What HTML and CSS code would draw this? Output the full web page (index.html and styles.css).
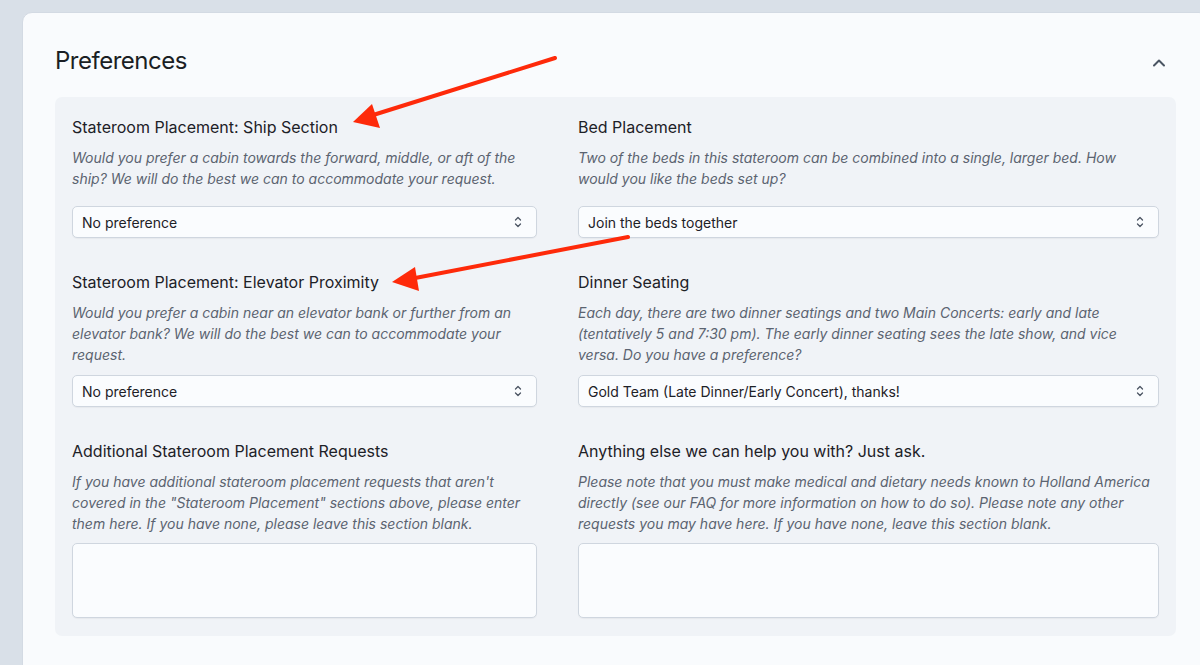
FILE: index.html
```html
<!DOCTYPE html>
<html lang="en">
<head>
    <meta charset="UTF-8">
    <meta name="viewport" content="width=device-width, initial-scale=1.0">
    <title>Preferences</title>
    <link rel="stylesheet" href="styles.css">
</head>
<body>

    <div class="card">
        <div class="card-header">
            <h2>Preferences</h2>
            <button class="collapse-btn" type="button" aria-label="Collapse">
                <svg width="14" height="10" viewBox="0 0 14 10"><path d="M2 7.5 L7 2.5 L12 7.5" fill="none" stroke="#4b5563" stroke-width="2" stroke-linecap="round" stroke-linejoin="round"/></svg>
            </button>
        </div>

        <div class="prefs-panel">
            <div class="field">
                <label for="ship_section">Stateroom Placement: Ship Section</label>
                <p class="hint">Would you prefer a cabin towards the forward, middle, or aft of the ship? We will do the best we can to accommodate your request.</p>
                <div class="select-wrap first-row">
                    <select id="ship_section">
                        <option>No preference</option>
                        <option>Forward</option>
                        <option>Middle</option>
                        <option>Aft</option>
                    </select>
                    <svg class="select-icon" width="10" height="14" viewBox="0 0 10 14"><path d="M2.5 5 L5 2.5 L7.5 5 M2.5 9 L5 11.5 L7.5 9" fill="none" stroke="#4b5563" stroke-width="1.3" stroke-linecap="round" stroke-linejoin="round"/></svg>
                </div>
            </div>

            <div class="field">
                <label for="bed_placement">Bed Placement</label>
                <p class="hint">Two of the beds in this stateroom can be combined into a single, larger bed. How would you like the beds set up?</p>
                <div class="select-wrap first-row">
                    <select id="bed_placement">
                        <option>Join the beds together</option>
                        <option>Keep the beds separate</option>
                    </select>
                    <svg class="select-icon" width="10" height="14" viewBox="0 0 10 14"><path d="M2.5 5 L5 2.5 L7.5 5 M2.5 9 L5 11.5 L7.5 9" fill="none" stroke="#4b5563" stroke-width="1.3" stroke-linecap="round" stroke-linejoin="round"/></svg>
                </div>
            </div>

            <div class="field">
                <label for="elevator">Stateroom Placement: Elevator Proximity</label>
                <p class="hint">Would you prefer a cabin near an elevator bank or further from an elevator bank? We will do the best we can to accommodate your request.</p>
                <div class="select-wrap">
                    <select id="elevator">
                        <option>No preference</option>
                        <option>Near an elevator bank</option>
                        <option>Away from an elevator bank</option>
                    </select>
                    <svg class="select-icon" width="10" height="14" viewBox="0 0 10 14"><path d="M2.5 5 L5 2.5 L7.5 5 M2.5 9 L5 11.5 L7.5 9" fill="none" stroke="#4b5563" stroke-width="1.3" stroke-linecap="round" stroke-linejoin="round"/></svg>
                </div>
            </div>

            <div class="field">
                <label for="dinner">Dinner Seating</label>
                <p class="hint">Each day, there are two dinner seatings and two Main Concerts: early and late (tentatively 5 and 7:30 pm). The early dinner seating sees the late show, and vice versa. Do you have a preference?</p>
                <div class="select-wrap">
                    <select id="dinner">
                        <option>Gold Team (Late Dinner/Early Concert), thanks!</option>
                        <option>Blue Team (Early Dinner/Late Concert), thanks!</option>
                    </select>
                    <svg class="select-icon" width="10" height="14" viewBox="0 0 10 14"><path d="M2.5 5 L5 2.5 L7.5 5 M2.5 9 L5 11.5 L7.5 9" fill="none" stroke="#4b5563" stroke-width="1.3" stroke-linecap="round" stroke-linejoin="round"/></svg>
                </div>
            </div>

            <div class="field">
                <label for="extra_placement">Additional Stateroom Placement Requests</label>
                <p class="hint">If you have additional stateroom placement requests that aren't covered in the "Stateroom Placement" sections above, please enter them here. If you have none, please leave this section blank.</p>
                <textarea id="extra_placement"></textarea>
            </div>

            <div class="field">
                <label for="anything_else">Anything else we can help you with? Just ask.</label>
                <p class="hint">Please note that you must make medical and dietary needs known to Holland America directly (see our FAQ for more information on how to do so). Please note any other requests you may have here. If you have none, leave this section blank.</p>
                <textarea id="anything_else"></textarea>
            </div>
        </div>
    </div>

    <!-- red callouts drawn on top of the form -->
    <svg class="callouts" width="1200" height="665" viewBox="0 0 1200 665">
        <line x1="555" y1="58" x2="370" y2="116" stroke="#fe2a0a" stroke-width="4" stroke-linecap="round"/>
        <polygon points="353,122 372,104 380,128" fill="#fe2a0a"/>
        <line x1="628" y1="237" x2="410" y2="279" stroke="#fe2a0a" stroke-width="4" stroke-linecap="round"/>
        <polygon points="392,282 415,267 419,291" fill="#fe2a0a"/>
    </svg>

</body>
</html>
```

FILE: styles.css
```css
body {
    font-family: Inter, "Noto Sans", sans-serif;
    background-color: #d9e0e8;
    margin: 0;
    padding: 12px 0 0 22px;
    height: 665px;
    box-sizing: border-box;
    overflow: hidden;
    color: #1d2127;
}
.card {
    width: 1187px;
    min-height: 700px;
    box-sizing: border-box;
    background-color: #f9fbfd;
    border: 1px solid #d3dae3;
    border-radius: 10px;
    padding: 32px 32px 0 32px;
}
.card-header {
    display: flex;
    justify-content: space-between;
    align-items: center;
    margin-bottom: 20px;
}
.card-header h2 {
    margin: 0;
    font-size: 24px;
    font-weight: 400;
    line-height: 32px;
    letter-spacing: -0.5px;
    color: #1b1f24;
}
.collapse-btn {
    background: none;
    border: none;
    padding: 0;
    margin-right: 10px;
    margin-top: 4px;
    cursor: pointer;
    display: flex;
}
.prefs-panel {
    background-color: #f0f3f7;
    border-radius: 7px;
    padding: 18px 17px 18px 17px;
    display: grid;
    grid-template-columns: 465px 581px;
    column-gap: 41px;
    row-gap: 32px;
}
.field {
    display: flex;
    flex-direction: column;
}
.field label {
    font-size: 16px;
    line-height: 24px;
    color: #1d2127;
}
.hint {
    margin: 8px 0 0 0;
    font-size: 14px;
    line-height: 21px;
    font-style: italic;
    color: #5b6370;
}
.select-wrap {
    position: relative;
    margin-top: 10px;
}
.select-wrap.first-row {
    margin-top: 17px;
}
select, textarea {
    font-family: inherit;
    box-sizing: border-box;
    width: 100%;
    background-color: #fafcfe;
    border: 1px solid #cfd6df;
    border-radius: 5px;
    box-shadow: 0 1px 1px rgba(0,0,0,0.04);
    color: #1d2127;
}
select {
    appearance: none;
    -webkit-appearance: none;
    height: 32px;
    padding: 0 30px 0 9px;
    font-size: 14px;
}
.select-icon {
    position: absolute;
    right: 14px;
    top: 9px;
    pointer-events: none;
}
textarea {
    margin-top: 9px;
    height: 75px;
    resize: none;
    padding: 8px 9px;
    font-size: 14px;
}
.callouts {
    position: absolute;
    left: 0;
    top: 0;
    pointer-events: none;
}
```
